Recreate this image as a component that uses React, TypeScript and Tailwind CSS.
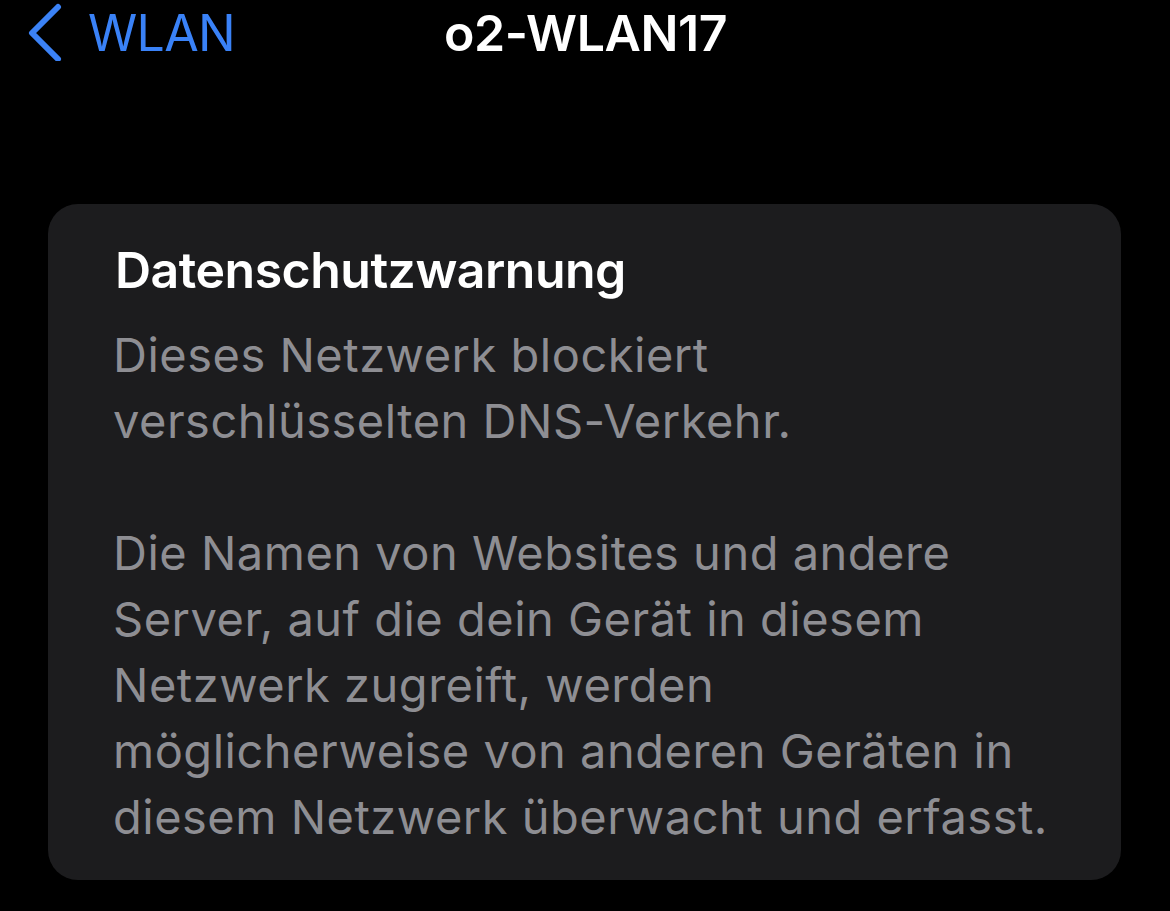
import React from "react";

export default function App() {
  const body1 = ["Dieses Netzwerk blockiert", "verschlüsselten DNS-Verkehr."];
  const body2 = [
    "Die Namen von Websites und andere",
    "Server, auf die dein Gerät in diesem",
    "Netzwerk zugreift, werden",
    "möglicherweise von anderen Geräten in",
    "diesem Netzwerk überwacht und erfasst.",
  ];
  return (
    <div
      className="w-[1170px] h-[911px] bg-black overflow-hidden"
      style={{ fontFamily: "Inter, 'Noto Sans', sans-serif" }}
    >
      <div className="relative h-[66px] flex items-center">
        <div className="flex items-center pl-[28px] gap-[26px]">
          <svg width="34" height="58" viewBox="0 0 34 58" className="mt-[-2px]">
            <path
              d="M30 4 L4 30 L30 56"
              fill="none"
              stroke="#3b82f6"
              strokeWidth="6"
              strokeLinecap="round"
              strokeLinejoin="round"
            />
          </svg>
          <span className="text-[#3a82f7] text-[50px] leading-none tracking-[-0.7px]">WLAN</span>
        </div>
        <div className="absolute left-[444px] top-0 h-[66px] flex items-center">
          <span className="text-white text-[50px] font-semibold leading-none tracking-[-0.4px]">o2-WLAN17</span>
        </div>
      </div>
      <div className="ml-[48px] mt-[138px] w-[1073px] h-[676px] rounded-[30px] bg-[#1c1c1e] pl-[67px] pt-[33px]">
        <div className="text-white text-[50px] font-semibold leading-[66px] tracking-[-0.5px]">
          Datenschutzwarnung
        </div>
        <div className="mt-[19px] ml-[-2px] text-[#8e8e93] text-[47px] leading-[66px] tracking-[0.5px]">
          {body1.map((l) => (
            <div key={l}>{l}</div>
          ))}
          <div className="h-[66px]" />
          {body2.map((l) => (
            <div key={l}>{l}</div>
          ))}
        </div>
      </div>
    </div>
  );
}
